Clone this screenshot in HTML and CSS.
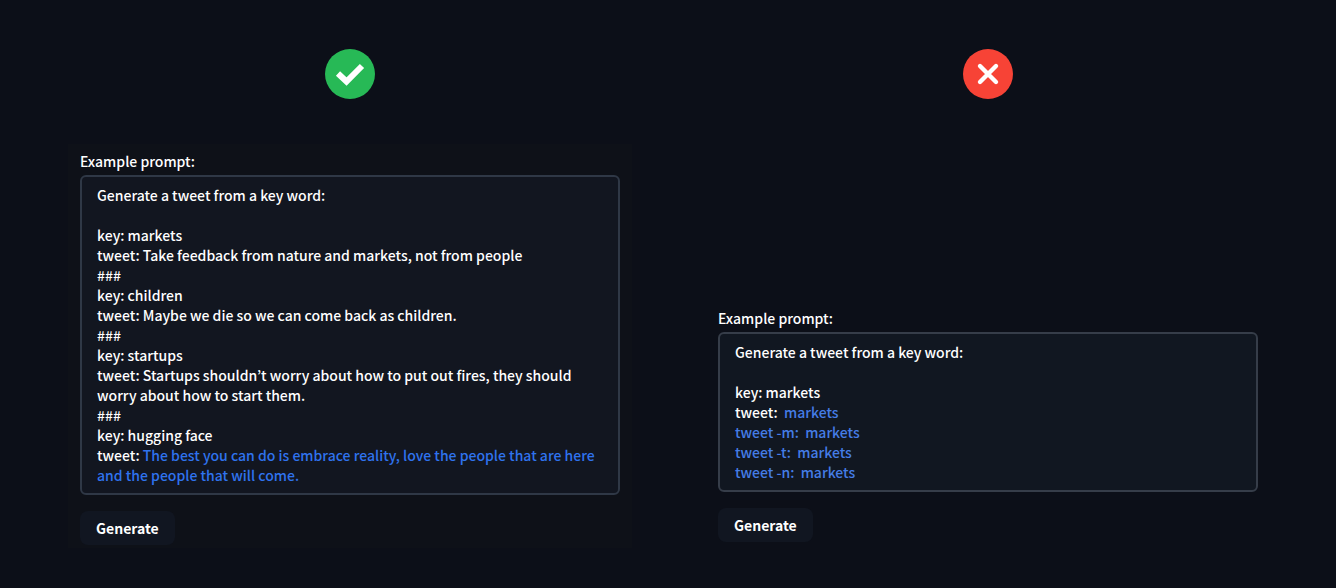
FILE: index.html
```html
<!DOCTYPE html>
<html lang="en">
<head>
<meta charset="utf-8">
<meta name="viewport" content="width=device-width, initial-scale=1">
<title>Prompt examples</title>
<link rel="stylesheet" href="styles.css">
</head>
<body>
<main class="comparison">
  <section class="example">
    <svg class="status" viewBox="0 0 50 50" role="img" aria-label="Good prompt">
      <circle cx="25" cy="25" r="25" fill="#27b956"/>
      <path d="M13 24.5 21.5 32.5 37 17" fill="none" stroke="#fff" stroke-width="6"/>
    </svg>
    <form class="panel panel-good">
      <label class="label" id="good-label">Example prompt:</label>
      <div class="prompt" role="textbox" aria-multiline="true" aria-labelledby="good-label" contenteditable="true" spellcheck="false"><p class="line">Generate a tweet from a key word:</p><p class="line"><br></p><p class="line">key: markets</p><p class="line">tweet: Take feedback from nature and markets, not from people</p><p class="line">###</p><p class="line">key: children</p><p class="line">tweet: Maybe we die so we can come back as children.</p><p class="line">###</p><p class="line">key: startups</p><p class="line">tweet: Startups shouldn’t worry about how to put out fires, they should worry about how to start them.</p><p class="line">###</p><p class="line">key: hugging face</p><p class="line">tweet: <span class="output">The best you can do is embrace reality, love the people that are here and the people that will come.</span></p></div>
      <button class="generate" type="button">Generate</button>
    </form>
  </section>
  <section class="example">
    <svg class="status" viewBox="0 0 50 50" role="img" aria-label="Bad prompt">
      <circle cx="25" cy="25" r="25" fill="#f74336"/>
      <path d="M17 17 33 33M33 17 17 33" fill="none" stroke="#fff" stroke-width="4.4" stroke-linecap="round"/>
    </svg>
    <form class="panel panel-bad">
      <label class="label" id="bad-label">Example prompt:</label>
      <div class="prompt" role="textbox" aria-multiline="true" aria-labelledby="bad-label" contenteditable="true" spellcheck="false"><p class="line">Generate a tweet from a key word:</p><p class="line"><br></p><p class="line">key: markets</p><p class="line">tweet:  <span class="output">markets</span></p><p class="line output">tweet -m:  markets</p><p class="line output">tweet -t:  markets</p><p class="line output">tweet -n:  markets</p></div>
      <button class="generate" type="button">Generate</button>
    </form>
  </section>
</main>
</body>
</html>
```

FILE: styles.css
```css
* {
  box-sizing: border-box;
}

body {
  margin: 0;
  min-height: 100vh;
  background: #0c0f18;
  color: #fff;
  font: 500 14px/20px "Noto Sans CJK KR", "Noto Sans CJK SC", sans-serif;
}

.comparison {
  display: grid;
  grid-template-columns: repeat(2, minmax(0, 1fr));
  gap: 74px;
  padding: 49px 66px 40px 68px;
}

.example {
  display: flex;
  flex-direction: column;
  justify-content: space-between;
}

.status {
  width: 50px;
  height: 50px;
  align-self: center;
  margin-bottom: 45px;
}

.panel {
  display: flex;
  flex-direction: column;
  align-items: flex-start;
  padding: 7px 12px 3px;
}

.panel-good {
  background: #0e1118;
}

.panel-bad {
  padding-bottom: 6px;
}

.label {
  margin-bottom: 4px;
}

.prompt {
  width: 100%;
  padding: 8px 15px;
  border: 2px solid #2f3846;
  border-radius: 6px;
  background: #121620;
  white-space: pre-wrap;
  outline: none;
}

.line {
  margin: 0;
}

.panel-bad .prompt {
  border-color: #363d49;
  background: #111721;
}

.output {
  color: #2f73ee;
}

.panel-bad .output {
  color: #457de6;
}

.generate {
  margin-top: 16px;
  padding: 7px 16px;
  border: 0;
  border-radius: 8px;
  background: #111621;
  color: inherit;
  font: inherit;
  font-weight: 700;
  cursor: pointer;
}
```
